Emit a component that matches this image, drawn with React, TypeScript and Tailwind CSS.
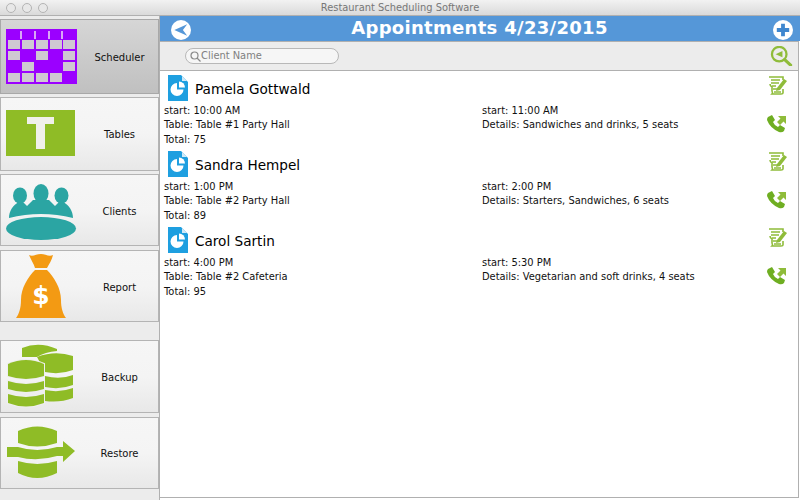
import React from "react";

function Calendar() {
  const rows = [
    [1, 1, 1, 1, 1],
    [1, 0, 1, 0, 1],
    [0, 1, 0, 0, 1],
    [1, 1, 1, 1, 0],
  ];
  const ys = [40, 51, 62, 73];
  const xs = [8, 22, 36, 50, 63];
  return (
    <svg width="72" height="56" viewBox="6 29 72 56" className="block">
      <rect x="6" y="29" width="71" height="55" fill="#9b00ff" />
      {[20, 34, 48, 61].map((x) => (
        <rect key={x} x={x} y="31" width="2" height="8" fill="#d9a8f5" />
      ))}
      {rows.map((r, i) =>
        r.map((c, j) =>
          c ? <rect key={i + "-" + j} x={xs[j]} y={ys[i]} width="12" height="9" fill="#cfc8d2" /> : null
        )
      )}
    </svg>
  );
}

function TableIcon() {
  return (
    <svg width="70" height="46" viewBox="0 0 70 46" className="block -mt-[2px]">
      <rect width="69" height="46" fill="#8fbc26" />
      <path d="M21 7H48V14H39V39H30V14H21Z" fill="#f0f0ea" />
    </svg>
  );
}

function ClientsIcon() {
  return (
    <svg width="71" height="56" viewBox="0 0 71 56" className="block mt-[4px]">
      <g fill="#2ba5a3">
        <ellipse cx="14" cy="11.5" rx="7" ry="8" />
        <ellipse cx="35" cy="9.5" rx="7.5" ry="9.5" />
        <ellipse cx="55.5" cy="11.5" rx="7" ry="8" />
        <path d="M3 34C3 27 7 21 13 18H17L21 22L27 16H43L49 22L53 18H57C63 21 67 27 67 34Q35 26 3 34Z" />
        <ellipse cx="35" cy="44.5" rx="35" ry="11.5" />
      </g>
    </svg>
  );
}

function BagIcon() {
  return (
    <svg width="50" height="65" viewBox="0 0 50 65" className="block">
      <g fill="#f39a13">
        <path d="M13 1C17 3 20 0 25 0C29 0 33 3 37 1C36 6 33 10 31 14H19C18 10 15 6 13 1Z" />
        <path d="M19 16H31C38 23 45 34 45 46C45 54 47 60 50 64H0C3 60 5 54 5 46C5 34 12 23 19 16Z" />
      </g>
      <text x="25" y="50" textAnchor="middle" fontSize="25" fontWeight="700" fill="#fff" fontFamily="'DejaVu Sans', sans-serif">$</text>
    </svg>
  );
}

function BackupIcon() {
  return (
    <svg width="67" height="65" viewBox="0 0 67 65" className="block">
      <g fill="#8fbc26">
        <path d="M15 4Q32 -3 50 5V7Q38 8 30 13H15Z" />
        <path d="M30 13Q48 6 66 12V26Q53 31 38 28Z" />
        <path d="M38 32Q53 36 66 31V41Q53 46 38 43Z" />
        <path d="M38 46Q53 49 66 44V54Q53 59 38 57Z" />
      </g>
      <g fill="#8fbc26" stroke="#efefef" strokeWidth="2" paintOrder="stroke">
        <path d="M1 20Q19 12 37 20V32Q19 38 1 32Z" />
        <path d="M1 37Q19 43 37 37V45Q19 51 1 45Z" />
        <path d="M1 50Q19 56 37 50V59Q19 66 1 59Z" />
      </g>
    </svg>
  );
}

function RestoreIcon() {
  return (
    <svg width="69" height="54" viewBox="0 0 69 54" className="block ml-[1px]">
      <g fill="#8fbc26">
        <path d="M11 5Q30 -4 50 5V17Q30 24 11 17Z" />
        <path d="M0 21H11Q30 27 50 21H56V15L68 25L56 36V30H50Q30 36 11 31H0Z" />
        <path d="M11 35Q30 41 50 35V47Q30 57 11 47Z" />
      </g>
    </svg>
  );
}

function DocIcon() {
  return (
    <svg width="20" height="26" viewBox="0 0 20 26" className="block shrink-0">
      <path d="M0 0H13L20 7V26H0Z" fill="#1e9fe0" />
      <path d="M14 1L19 6H14Z" fill="#cfe9f8" />
      <path d="M9 8A6.5 6.5 0 1 0 15.5 14.5H9Z" fill="#fff" />
      <path d="M11 6.5A6 6 0 0 1 17 12.5H11Z" fill="#fff" />
    </svg>
  );
}

function NoteIcon() {
  return (
    <svg width="19" height="19" viewBox="0 0 19 19" className="block">
      <g fill="none" stroke="#8fbc3a" strokeWidth="1.6">
        <path d="M1 1H15V4M15 13V17Q15 18 13 18H4Q5 17 4 15V11Q2 10 2 8" />
        <path d="M3 4H12M3 7H11M4 10H8M5 13H10M6 16H13" />
      </g>
      <path d="M9 12L16 3L19 5L12 14L8 15Z" fill="#8fbc3a" />
    </svg>
  );
}

function PhoneIcon() {
  return (
    <svg width="20" height="18" viewBox="0 0 20 18" className="block">
      <path
        d="M1 2L5 0L8 5L6 7Q7 10 11 12L13 10L18 13L17 16Q15 18 12 17Q3 13 0 5Q0 3 1 2Z"
        fill="#6fae22"
      />
      <path d="M11 1H19V9L16.5 6.5L13 10L10 7L13.5 3.5Z" fill="#8fbc3a" />
    </svg>
  );
}

function AppointmentRow(p: { name: string; start: string; end: string; table: string; details: string; total: string }) {
  return (
    <div className="relative h-[76px] text-[9.9px] leading-[14.5px] text-[#111]">
      <div className="flex items-center gap-[7px] pl-[8px] pt-[2px] h-[32px]">
        <DocIcon />
        <span className="text-[13.6px] leading-[20px] text-black mt-[2px]">{p.name}</span>
      </div>
      <div className="grid grid-cols-[318px_1fr] pl-[4px] pt-[0.5px]">
        <div>start: {p.start}</div>
        <div>start: {p.end}</div>
        <div>Table: {p.table}</div>
        <div>Details: {p.details}</div>
        <div>Total: {p.total}</div>
      </div>
      <div className="absolute right-[11px] top-[5px]"><NoteIcon /></div>
      <div className="absolute right-[11px] top-[44px]"><PhoneIcon /></div>
    </div>
  );
}

function SideButton(p: { label: string; icon: React.ReactNode; active?: boolean; h: string; low?: boolean }) {
  return (
    <div
      className={
        "flex items-center border " +
        p.h +
        " " +
        (p.active
          ? "bg-gradient-to-b from-[#d6d6d6] to-[#c0c0c0] border-[#a8a8a8]"
          : "bg-gradient-to-b from-[#f6f6f6] via-[#f4f4f4] to-[#e8e8e8] border-[#b4b4b4]")
      }
    >
      <div className="w-[80px] pl-[5px] flex items-center justify-start">{p.icon}</div>
      <div className={"flex-1 text-center text-[10px] text-[#111] " + (p.low ? "pt-[3px]" : "pt-[1px]")}>{p.label}</div>
    </div>
  );
}

export default function App() {
  return (
    <div className="w-[800px] h-[500px] overflow-hidden bg-white flex flex-col font-['DejaVu_Sans',sans-serif]">
      <div className="h-[16px] shrink-0 relative flex items-center justify-center bg-gradient-to-b from-[#f2f2f2] to-[#dadada] border-b border-[#b0b0b0]">
        <div className="absolute left-[6px] top-[3px] flex gap-[6px]">
          <span className="w-[10px] h-[10px] rounded-full border border-[#b4b4b4] bg-[#e8e8e8]" />
          <span className="w-[10px] h-[10px] rounded-full border border-[#b4b4b4] bg-[#e8e8e8]" />
          <span className="w-[10px] h-[10px] rounded-full border border-[#b4b4b4] bg-[#e8e8e8]" />
        </div>
        <span className="text-[9.9px] leading-[14px] text-[#777]">Restaurant Scheduling Software</span>
      </div>
      <div className="flex flex-1 min-h-0">
        <div className="w-[160px] shrink-0 bg-[#ececec] pt-[3px] border-r border-[#b0b0b0] flex flex-col">
          <SideButton h="h-[75px]" active label="Scheduler" icon={<Calendar />} />
          <div className="h-[3px]" />
          <SideButton h="h-[74px]" label="Tables" icon={<TableIcon />} />
          <div className="h-[3px]" />
          <SideButton h="h-[72px]" low label="Clients" icon={<ClientsIcon />} />
          <div className="h-[4px]" />
          <SideButton h="h-[72px]" low label="Report" icon={<div className="pl-[10px]"><BagIcon /></div>} />
          <div className="h-[18px]" />
          <SideButton h="h-[73px]" label="Backup" icon={<div className="pl-[1px]"><BackupIcon /></div>} />
          <div className="h-[4px]" />
          <SideButton h="h-[72px]" label="Restore" icon={<RestoreIcon />} />
        </div>
        <div className="flex-1 min-w-0 h-[482px] flex flex-col">
          <div className="h-[25px] shrink-0 bg-[#5597d8] flex items-center justify-between pl-[11px] pr-[7px]">
            <svg width="20" height="20" viewBox="0 0 21 21" className="block mt-[2px]">
              <circle cx="10.5" cy="10.5" r="10.5" fill="#fff" />
              <path d="M3.5 10.5L17 4.5L12.5 10.5L17 16.5Z" fill="#5597d8" />
            </svg>
            <span className="text-[18px] font-bold text-white leading-[24px] tracking-[0.3px] mr-[5px] -mt-[2px]">Appointments 4/23/2015</span>
            <svg width="20" height="20" viewBox="0 0 21 21" className="block mt-[2px]">
              <circle cx="10.5" cy="10.5" r="10.5" fill="#fff" />
              <path d="M8.5 4H12.5V8.5H17V12.5H12.5V17H8.5V12.5H4V8.5H8.5Z" fill="#3f87cf" />
            </svg>
          </div>
          <div className="h-[30px] shrink-0 mr-[1px] bg-[#ececec] border-y border-r border-[#b0b0b0] flex items-center justify-between pl-[25px] pr-[5px]">
            <div className="w-[154px] h-[16px] rounded-full border border-[#b8b8b8] bg-[#f6f6f6] flex items-center pl-[4px]">
              <svg width="11" height="11" viewBox="0 0 11 11" fill="none" stroke="#8a8a8a" strokeWidth="1.2">
                <circle cx="4.5" cy="4.5" r="3.5" />
                <path d="M7 7L10.5 10.5" />
              </svg>
              <span className="text-[9.9px] text-[#808080] leading-none">Client Name</span>
            </div>
            <svg width="23" height="20" viewBox="0 0 24 22" className="block" fill="none">
              <circle cx="9.5" cy="9" r="8" stroke="#8fbc3a" strokeWidth="2.5" />
              <path d="M15.5 15L22 21" stroke="#8fbc3a" strokeWidth="3.5" strokeLinecap="round" />
              <path d="M5.5 9L13 5.5V12.5Z" fill="#8fbc3a" />
            </svg>
          </div>
          <div className="flex-1 mr-[1px] bg-white border-r border-b border-[#b0b0b0]">
            <AppointmentRow name="Pamela Gottwald" start="10:00 AM" end="11:00 AM" table="Table #1 Party Hall" details="Sandwiches and drinks, 5 seats" total="75" />
            <AppointmentRow name="Sandra Hempel" start="1:00 PM" end="2:00 PM" table="Table #2 Party Hall" details="Starters, Sandwiches, 6 seats" total="89" />
            <AppointmentRow name="Carol Sartin" start="4:00 PM" end="5:30 PM" table="Table #2 Cafeteria" details="Vegetarian and soft drinks, 4 seats" total="95" />
          </div>
        </div>
      </div>
    </div>
  );
}
